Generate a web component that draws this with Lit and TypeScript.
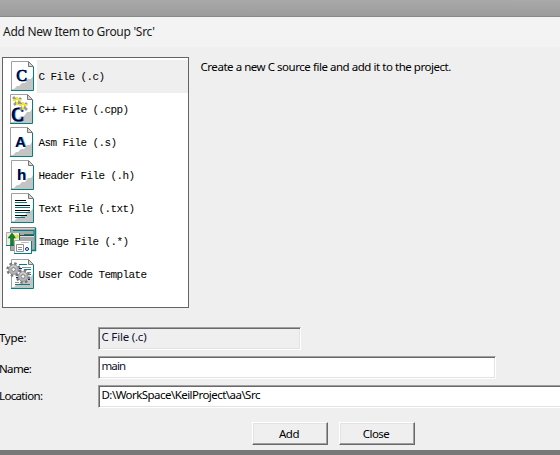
import { LitElement, html, css, svg, nothing } from "lit";
import { customElement, property } from "lit/decorators.js";

const page = svg`
  <path d="M11.5 1.500H28.500L33.500 6.500V30.500H11.500Z" fill="#fff"/>
  <path d="M12 30V29H14L17 26H19L22 23H25L28 19H31L33 16V30Z" fill="#c4c4c4"/>
  <path d="M11.500 30V1.500H28" fill="none" stroke="#a0a0a0"/>
  <path d="M28.500 1.500V6.500H33.500Z" fill="#d8d8d8" stroke="#777"/>
  <path d="M33.500 7V30.500H11" fill="none" stroke="#008080"/>`;

const letter = (t: string, cls: string, x: number, y: number) =>
  svg`<text class=${cls} x=${x + 0.7} y=${y} fill="#30b8f0" stroke="#30b8f0">${t}</text><text class=${cls} x=${x} y=${y} fill="#000038" stroke="#000038">${t}</text>`;

const gear = (x: number, y: number) => svg`<g transform="translate(${x} ${y})">
  <circle r="5.900" fill="none" stroke="#777" stroke-width="2.600" stroke-dasharray="2.400 2.234"/>
  <circle r="4.800" fill="#b4b4b4" stroke="#959595"/>
  <path d="M-3 -2L0 -4L3 -2" fill="none" stroke="#ddd"/>
  <circle r="1.800" fill="#fff" stroke="#888"/></g>`;

const spark = (x: number, y: number) => svg`<g transform="translate(${x} ${y})">
  <path d="M-4 -4L4 4M4 -3L-3 4" stroke="#999" stroke-width="2.600"/>
  <path d="M-4 -1H4M0 -4V4" stroke="#f0e428" stroke-width="1.800"/>
  <path d="M-1 -1H1V1H-1Z" fill="#fffcc0"/></g>`;

const shifted = (dx: number, content: unknown) => svg`<g transform="translate(${dx} 0)">${content}</g>`;

const icons: Record<string, unknown> = {
  c: svg`${page}${letter("C", "serif", 21.5, 21)}`,
  cpp: shifted(-1, svg`${page}${letter("C", "serif large", 18.5, 27.5)}${spark(18, 8)}${spark(24, 13)}`),
  asm: shifted(-1, svg`${page}${letter("A", "sans", 21.5, 20.5)}`),
  header: svg`${page}${letter("h", "sans", 21.5, 20.5)}`,
  text: svg`${page}
    <path d="M15 8.500H26M15 13.500H30M15 18.500H30M15 23.500H27" stroke="#000"/>
    <path d="M15 10.500H27M15 15.500H30M15 20.500H30M15 25.500H25" stroke="#008080"/>`,
  image: svg`
    <path d="M10.500 2.500H35.500V25.500H10.500Z" fill="#a8a8a8" stroke="#808080"/>
    <path d="M11 3.500H35" stroke="#d8d8d8"/>
    <path d="M13 5.500H34V9.500H24" fill="none" stroke="#008080"/>
    <path d="M20 10.500H34" stroke="#444"/><path d="M20 11.500H34" stroke="#ddd"/>
    <path d="M35.500 3V25.500H31" fill="none" stroke="#008080" stroke-width="1.500"/>
    <path d="M6.500 7.500H19.500V20.500H6.500Z" fill="#ececec" stroke="#aaa"/>
    <path d="M19.500 8V20.500H6" fill="none" stroke="#008080"/>
    <path d="M12 8L8 13H10.500V20H13.500V13H16Z" fill="#108820" stroke="#075015" stroke-width=".5"/>
    <circle cx="17" cy="11.500" r="2" fill="#f0e020"/>
    <path d="M14.500 15.500H31.500V28.500H14.500Z" fill="#fff" stroke="#aaa"/>
    <path d="M31.500 16V28.500H14" fill="none" stroke="#008080"/>
    <path d="M16.500 19.500H23.500V26.500H16.500ZM18 22.500H22M18 24.500H22" fill="none" stroke="#909090"/>
    <circle cx="27" cy="24" r="1.500" fill="#fff" stroke="#1818a0"/><path d="M21 17.500H29" stroke="#bbb"/>`,
  template: svg`${page}
    <path d="M19 6.500H27M24 11.500H31M27 16.500H31M15 26.500H30" stroke="#008080"/>
    <path d="M22 9.500H31M27 14.500H31M15 24.500H19" stroke="#909090"/>
    ${gear(13.5, 11.5)}${gear(23, 18.5)}
    <path d="M19 10.500H22M28 21.500H30M16 19.500H18" stroke="#1818a0"/>`,
};

@customElement("file-kind")
class FileKind extends LitElement {
  @property() icon = "";
  @property() label = "";
  @property({ type: Boolean }) selected = false;

  static styles = css`
    :host { display: flex; height: 33px; }
    svg { width: 34px; height: 33px; flex: none; }
    .serif { font: 16px "Liberation Serif", serif; text-anchor: middle; stroke-width: 0.6px; }
    .large { font-size: 18px; stroke-width: 1px; }
    .sans { font: bold 15px "Liberation Sans", sans-serif; text-anchor: middle; stroke-width: 0; }
    .label {
      flex: 1; padding-left: 1.500px; line-height: 34px; white-space: pre; color: #000;
      font-family: "Liberation Mono", monospace; font-size: 11px; letter-spacing: -0.6px;
    }
    .selected { background: #efefef; }
  `;

  render() {
    return html`<svg viewBox="3 0 34 33">${icons[this.icon] ?? nothing}</svg>
      <div class="label ${this.selected ? "selected" : ""}">${this.label}</div>`;
  }
}

const kinds = [
  ["c", "C File (.c)"],
  ["cpp", "C++ File (.cpp)"],
  ["asm", "Asm File (.s)"],
  ["header", "Header File (.h)"],
  ["text", "Text File (.txt)"],
  ["image", "Image File (.*)"],
  ["template", "User Code Template"],
];

@customElement("app-root")
class AppRoot extends LitElement {
  static styles = css`
    :host {
      display: flex; flex-direction: column; width: 560px; height: 455px; overflow: hidden;
      box-sizing: border-box; background: #787878; color: #000;
      font-family: "Noto Sans", sans-serif; font-size: 11.500px; white-space: nowrap;
    }
    .backdrop { height: 16px; flex: none; background: linear-gradient(#a9a9a9, #9c9c9c); }
    .dialog { height: 433px; flex: none; background: #efefef; border-top: 1px solid #888; }
    .title { height: 30px; line-height: 30px; padding-left: 3px; background: #f3f3f3; font-size: 12px; letter-spacing: -0.28px; color: #1a1a1a; }
    .body { display: flex; padding: 10px 0 0 2px; gap: 11.500px; }
    .list { width: 187px; height: 251px; box-sizing: border-box; border: 1px solid #646464; background: #fff; padding-top: 2px; }
    .hint { padding-top: 2px; line-height: 16px; letter-spacing: -0.46px; }
    .form { display: grid; grid-template: 23px 23px 23px / 99px 1fr; row-gap: 6px; padding-top: 19px; margin-left: -1px; }
    .form label { line-height: 22px; letter-spacing: -0.65px; }
    .form .type-label { letter-spacing: -0.3px; }
    .form .name-label { line-height: 26px; }
    .field {
      box-sizing: border-box; height: 23px; line-height: 18px; padding-left: 2.500px; background: #fff; color: #101030;
      border: 1px solid; border-color: #a0a0a0 #fff #fff #a0a0a0;
      box-shadow: inset 1px 1px #696969, inset -1px -1px #e3e3e3;
    }
    .type { width: 203px; background: #efefef; letter-spacing: -0.2px; }
    .name { width: 398px; letter-spacing: -0.9px; }
    .location { width: 470px; color: #000; letter-spacing: -0.54px; }
    .actions { display: flex; gap: 11px; padding: 14px 0 0 252px; }
    button {
      width: 76px; height: 23px; padding: 0 2px 0 0; font: inherit; color: #000; background: #efefef;
      border: 1px solid; border-color: #fff #696969 #696969 #fff; border-radius: 0;
      box-shadow: inset -1px -1px #a0a0a0, inset 1px 1px #e3e3e3; letter-spacing: -0.5px; line-height: 20px;
    }
  `;

  render() {
    return html`
      <div class="backdrop"></div>
      <div class="dialog">
        <div class="title">Add New Item to Group 'Src'</div>
        <div class="body">
          <div class="list">
            ${kinds.map(([icon, label], i) => html`<file-kind .icon=${icon} .label=${label} .selected=${i === 0}></file-kind>`)}
          </div>
          <div class="hint">Create a new C source file and add it to the project.</div>
        </div>
        <div class="form">
          <label class="type-label">Type:</label><div class="field type">C File (.c)</div>
          <label class="name-label">Name:</label><div class="field name">main</div>
          <label>Location:</label><div class="field location">D:\\WorkSpace\\KeilProject\\aa\\Src</div>
        </div>
        <div class="actions"><button>Add</button><button>Close</button></div>
      </div>`;
  }
}
